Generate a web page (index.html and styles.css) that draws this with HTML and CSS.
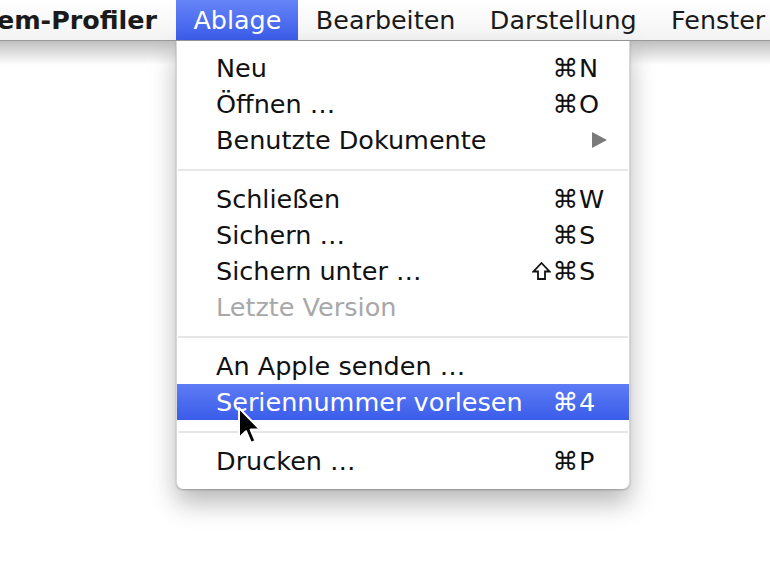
FILE: index.html
```html
<!DOCTYPE html>
<html lang="de">
<head>
<meta charset="utf-8">
<link rel="stylesheet" href="styles.css">
</head>
<body>
<div class="screen">
  <nav class="menubar">
    <span class="mb-item app"><span>System-Profiler</span></span>
    <span class="mb-item active">Ablage</span>
    <span class="mb-item">Bearbeiten</span>
    <span class="mb-item">Darstellung</span>
    <span class="mb-item">Fenster</span>
  </nav>
  <div class="bar-shadow"></div>

  <div class="menu">
    <div class="row"><span class="label">Neu</span><span class="sc"><span class="mods">⌘</span><span class="key">N</span></span></div>
    <div class="row"><span class="label">Öffnen …</span><span class="sc"><span class="mods">⌘</span><span class="key">O</span></span></div>
    <div class="row"><span class="label">Benutzte Dokumente</span><span class="arrow"></span></div>
    <div class="sep"></div>
    <div class="row"><span class="label">Schließen</span><span class="sc"><span class="mods">⌘</span><span class="key">W</span></span></div>
    <div class="row"><span class="label">Sichern …</span><span class="sc"><span class="mods">⌘</span><span class="key">S</span></span></div>
    <div class="row"><span class="label">Sichern unter …</span><span class="sc"><span class="mods"><svg class="shift" width="19" height="20" viewBox="0 0 19 20" role="img" aria-label="Umschalt"><path d="M9.5 2 L17.5 10.5 L13 10.5 L13 18 L6 18 L6 10.5 L1.5 10.5 Z" fill="none" stroke="#111" stroke-width="1.8" stroke-linejoin="miter"/></svg>⌘</span><span class="key">S</span></span></div>
    <div class="row disabled"><span class="label">Letzte Version</span></div>
    <div class="sep"></div>
    <div class="row"><span class="label">An Apple senden …</span></div>
    <div class="row selected"><span class="label">Seriennummer vorlesen</span><span class="sc"><span class="mods">⌘</span><span class="key">4</span></span></div>
    <div class="sep"></div>
    <div class="row"><span class="label">Drucken …</span><span class="sc"><span class="mods">⌘</span><span class="key">P</span></span></div>
  </div>

  <svg class="cursor" width="26" height="40" viewBox="0 0 13 20" aria-hidden="true">
    <path d="M1 1 L1 16 L4.5 12.6 L7 18.4 L9.2 17.4 L6.8 11.8 L11.6 11.8 Z" fill="#000" stroke="#fff" stroke-width="1" stroke-linejoin="round"/>
  </svg>
</div>
</body>
</html>
```

FILE: styles.css
```css
* { box-sizing: border-box; }
html, body { margin: 0; padding: 0; background: #fff; }
body { width: 770px; height: 578px; overflow: hidden; font-family: "DejaVu Sans", "Liberation Sans", sans-serif; color: #111; }
.screen { position: relative; width: 770px; height: 578px; overflow: hidden; background: #fff; }

.menubar {
  display: flex;
  height: 41px;
  align-items: stretch;
  background: linear-gradient(#ffffff, #f3f3f3);
  border-bottom: 1px solid #9a9a9a;
  white-space: nowrap;
  font-size: 25.4px;
}
.mb-item { display: flex; align-items: center; padding: 0 17px 1px 17.5px; color: #1a1a1a; flex: none; }
.mb-item.app {
  font-weight: bold;
  width: 176px;
  justify-content: flex-end;
  padding: 0 19px 1px 0;
  overflow: hidden;
}
.mb-item.active {
  color: #fff;
  background: linear-gradient(#6684f7, #3b5cea);
}
.bar-shadow { height: 24px; background: linear-gradient(#c0c0c0, rgba(255,255,255,0)); }

.menu {
  position: absolute;
  left: 176px;
  top: 41px;
  width: 454px;
  padding: 9px 0 10px;
  background: #fff;
  border-radius: 0 0 7px 7px;
  border-left: 1px solid #d8d8d8;
  border-right: 1px solid #d8d8d8;
  box-shadow: 0 14px 26px rgba(0,0,0,0.28), 0 1px 2px rgba(0,0,0,0.25);
  font-size: 25.5px;
}
.row {
  display: flex;
  align-items: center;
  height: 36px;
  padding: 0 22px 0 39px;
  white-space: nowrap;
}
.row .label { flex: 1; }
.row.disabled { color: #a8a8a8; }
.row.selected { color: #fff; background: linear-gradient(#5d7cf5, #3b5ce9); }
.sc { display: flex; width: 52px; flex: none; }
.mods { width: 23px; flex: none; display: flex; justify-content: flex-end; align-items: center; }
.shift { flex: none; margin-right: 2px; }
.key { padding-left: 1px; }
.arrow {
  width: 0; height: 0;
  border-top: 8px solid transparent;
  border-bottom: 8px solid transparent;
  border-left: 15px solid #7a7a7a;
}
.sep { height: 23px; display: flex; align-items: center; }
.sep::before { content: ""; flex: 1; height: 2px; background: #e6e6e6; margin: 0 1px; }

.cursor { position: absolute; left: 237px; top: 406px; }
```
